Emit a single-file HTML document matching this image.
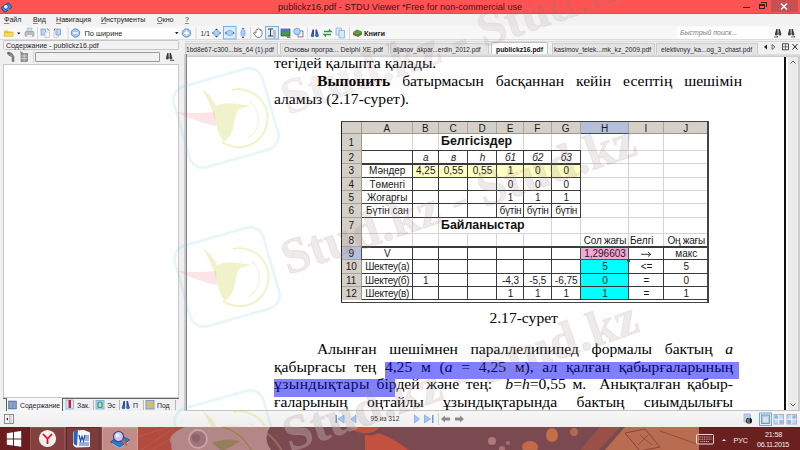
<!DOCTYPE html>
<html><head><meta charset="utf-8">
<style>
*{margin:0;padding:0;box-sizing:border-box}
html,body{width:800px;height:450px;overflow:hidden;background:#f0f0f0;font-family:"Liberation Sans",sans-serif;position:relative}
.a{position:absolute}
.ui{font-size:7.2px;color:#1e1e1e;white-space:nowrap}
#menu u{text-decoration-color:#888;text-underline-offset:1px}
#title{left:0;top:0;width:800px;height:14px;background:#fd5353}
#menu{left:0;top:14px;width:800px;height:12px;background:#f2f2f2}
#tool{left:0;top:26px;width:800px;height:14px;background:#f7f7f7;border-bottom:1px solid #dcdcdc}
#lp{left:0;top:40px;width:180px;height:371px;background:#f0f0f0}
#doc{left:184px;top:40px;width:616px;height:371px;background:#f0f0f0}
#view{left:187px;top:56.5px;width:599px;height:353.5px;background:#fff;overflow:hidden}
#status{left:0;top:411px;width:800px;height:15.5px;background:linear-gradient(#f6f6f6,#efefef)}
#task{left:0;top:426.5px;width:800px;height:23.5px;background:#7a3434}
.serif{font-family:"Liberation Serif",serif;font-size:15.6px;color:#111;white-space:nowrap}
.hl{color:#08085a}
.tc{font-family:"Liberation Sans",sans-serif;white-space:nowrap;line-height:13.3px;color:#111}
.ln{position:absolute;left:88px;width:468px;text-align:justify;text-align-last:justify;white-space:nowrap;font-family:"Liberation Serif",serif;font-size:15.6px;color:#000;line-height:18px}
</style></head><body>
<div id="title" class="a">
<div class="a" style="left:0;top:12.6px;width:800px;height:1.2px;background:#e8445a"></div>
<svg class="a" style="left:1px;top:2px" width="11" height="11" viewBox="0 0 11 11"><g transform="rotate(-35 5.5 5.5)"><rect x="1" y="2.5" width="9" height="6" rx="1" fill="#3a8ee6" stroke="#1e3c7a" stroke-width="0.8"/></g><circle cx="4.8" cy="4.8" r="2.4" fill="#dfe4f8" stroke="#333a80" stroke-width="0.8"/><line x1="6.6" y1="6.8" x2="9" y2="9.2" stroke="#e07a40" stroke-width="1.2"/></svg>
<div class="a" style="left:277.5px;top:1.2px;font-size:9.5px;transform:scaleX(0.96);transform-origin:0 0;color:#3e1818;white-space:nowrap">publickz16.pdf - STDU Viewer *Free for non-commercial use</div>
<div class="a" style="left:743px;top:7px;width:7px;height:1.3px;background:#3a2020"></div>
<div class="a" style="left:759px;top:3.5px;width:6px;height:5.5px;border:1.2px solid #3a2020;border-top-width:2px"></div>
<div class="a" style="left:761px;top:2px;width:5.5px;height:5px;border-top:1px solid #3a2020;border-right:1px solid #3a2020"></div>
<div class="a" style="left:771px;top:0;width:27px;height:11.5px;background:#c85050"></div>
<svg class="a" style="left:780px;top:2.5px" width="8" height="7" viewBox="0 0 8 7"><path d="M1 0.5 L7 6.5 M7 0.5 L1 6.5" stroke="#fff" stroke-width="1.5"/></svg>
</div>
<div id="menu" class="a">
<div class="a ui" style="left:4px;top:2px;font-size:7.1px"><u>Ф</u>айл</div>
<div class="a ui" style="left:33px;top:2px;font-size:7.1px"><u>В</u>ид</div>
<div class="a ui" style="left:56px;top:2px;font-size:7.1px"><u>Н</u>авигация</div>
<div class="a ui" style="left:101px;top:2px;font-size:7.1px"><u>И</u>нструменты</div>
<div class="a ui" style="left:157px;top:2px;font-size:7.1px"><u>О</u>кно</div>
<div class="a ui" style="left:185px;top:2px;font-size:7.1px"><u>?</u></div>
</div>
<div id="tool" class="a">
<svg class="a" style="left:0;top:0" width="800" height="14" viewBox="0 0 800 14">
<!-- folder -->
<path d="M4 4.5 h3.5 l1 1 h4 v1.5 h-8.5z" fill="#e8c440"/><path d="M4 6.5 h9.5 l-0.5 4 h-9z" fill="#f5d85a" stroke="#d0a830" stroke-width="0.4"/>
<path d="M17 6.5 h3.5 l-1.75 2z" fill="#222"/>
<!-- printer -->
<rect x="27" y="2" width="5" height="4" fill="#cfe0f4" stroke="#8aa" stroke-width="0.5"/><rect x="25" y="5.5" width="9" height="5" rx="1" fill="#b8bcc0" stroke="#888" stroke-width="0.5"/><rect x="27" y="9" width="5" height="2.5" fill="#eee"/>
<line x1="37.5" y1="1" x2="37.5" y2="13" stroke="#d8d8d8"/>
<!-- pages -->
<rect x="41" y="3" width="4.5" height="6" fill="#b8d4f4" stroke="#5a8ad0" stroke-width="0.6"/><rect x="45" y="6" width="4.5" height="5.5" fill="#f4f4f4" stroke="#aaa" stroke-width="0.5"/><path d="M47 2.5 l2 2" stroke="#222" stroke-width="0.8"/>
<rect x="54" y="6" width="4.5" height="5.5" fill="#f4f4f4" stroke="#aaa" stroke-width="0.5"/><rect x="56" y="3" width="4.5" height="6" fill="#b8d4f4" stroke="#5a8ad0" stroke-width="0.6"/><path d="M55 2.5 l-1 2" stroke="#222" stroke-width="0.8"/>
<line x1="68" y1="1" x2="68" y2="13" stroke="#d8d8d8"/>
<circle cx="75.5" cy="7" r="4.2" fill="#a8c8f0" stroke="#4a80d0" stroke-width="0.8"/><rect x="73" y="6.3" width="5" height="1.4" fill="#fff"/>
<circle cx="186.5" cy="7" r="4.2" fill="#a8c8f0" stroke="#4a80d0" stroke-width="0.8"/><rect x="184" y="6.3" width="5" height="1.4" fill="#fff"/><rect x="185.8" y="4.5" width="1.4" height="5" fill="#fff"/>
<line x1="196" y1="1" x2="196" y2="13" stroke="#d8d8d8"/>
<text x="200.5" y="9.6" font-family="Liberation Sans" font-size="6.8" fill="#333">1/1</text>
<!-- zoom icons -->
<path d="M216.5 2.5 l1.5 1.5 h-3z M216.5 11.5 l1.5 -1.5 h-3z M212 7 l1.5 -1.5 v3z M221 7 l-1.5 -1.5 v3z" fill="#333"/><circle cx="216.5" cy="7" r="3" fill="#a8d0f8" stroke="#5a90d0" stroke-width="0.5"/>
<rect x="223.5" y="0.5" width="12.5" height="12.5" fill="#dcecfc" stroke="#7ab0e8" stroke-width="1"/>
<ellipse cx="229.8" cy="7" rx="3.6" ry="2.6" fill="#a8d0f8" stroke="#5a90d0" stroke-width="0.5"/><path d="M225 7 l1.2 -1.2 v2.4z M234.6 7 l-1.2 -1.2 v2.4z" fill="#333"/>
<ellipse cx="243" cy="7" rx="2.2" ry="3.8" fill="#a8d0f8" stroke="#5a90d0" stroke-width="0.5"/><path d="M243 1.8 l1.2 1.2 h-2.4z M243 12.2 l1.2 -1.2 h-2.4z" fill="#333"/>
<line x1="250.5" y1="1" x2="250.5" y2="13" stroke="#d8d8d8"/>
<!-- hand -->
<path d="M256 7 v-3 q0.8 -1 1.5 0 v-1 q0.8 -1 1.5 0 v0.5 q0.8 -1 1.5 0 v1 q0.8 -0.8 1.5 0 v4 q-0.5 3 -3 3 h-1 q-2 0 -3 -2.5 l-1.5 -2 q0.5 -1 2 0z" fill="#fff" stroke="#333" stroke-width="0.6"/>
<rect x="265.5" y="0.5" width="13" height="12.5" fill="#dcecfc" stroke="#7ab0e8" stroke-width="1"/>
<path d="M268 3 h5 M270.5 3 v7 M268 10 h5" stroke="#333" stroke-width="0.9"/><path d="M273 5 h3 M273 7 h3 M273 9 h3 M273 11 h3" stroke="#777" stroke-width="0.7"/>
<!-- image -->
<rect x="281" y="3" width="9" height="7" fill="#4a9a40" stroke="#333" stroke-width="0.6"/><rect x="281.3" y="3.3" width="8.4" height="3" fill="#3a80d8"/><path d="M286 10 h4 M287 11.5 h3.5" stroke="#555" stroke-width="0.8"/>
<!-- globe page -->
<rect x="298" y="5" width="5" height="6" fill="#eee" stroke="#444" stroke-width="0.6"/><circle cx="297" cy="5.5" r="3.3" fill="#b0d4f8" stroke="#4a80c0" stroke-width="0.6"/>
<line x1="307.5" y1="1" x2="307.5" y2="13" stroke="#d8d8d8"/>
<!-- binoculars -->
<path d="M311 9.5 l1.5 -6 h1.5 v6z M315.5 9.5 v-6 h1.5 l1.5 6z" fill="#2a4a9a"/><circle cx="312.5" cy="9.5" r="1.8" fill="#3a6ac0"/><circle cx="317" cy="9.5" r="1.8" fill="#3a6ac0"/>
<!-- arrows -->
<path d="M324 5.5 h7 l-2 -2 M331 8.5 h-7 l2 2" stroke="#2a9a40" stroke-width="1.4" fill="none"/>
<!-- copy -->
<rect x="336" y="2" width="5.5" height="7" fill="#d8e8fa" stroke="#6a9ad8" stroke-width="0.6"/><rect x="339" y="4.5" width="5.5" height="7.5" fill="#d8e8fa" stroke="#6a9ad8" stroke-width="0.6"/>
<line x1="349.5" y1="1" x2="349.5" y2="13" stroke="#d8d8d8"/>
<!-- books -->
<path d="M353 6 l4 -2.5 l5 2 l-4 2.5z" fill="#4aa040"/><path d="M353 6 v3 l5 2 v-3z" fill="#8a6a30"/><path d="M358 8 v3 l4 -2.5 v-3z" fill="#3a8a30"/>
<text x="364" y="9.8" font-family="Liberation Sans" font-size="7.4" font-weight="bold" fill="#222">Книги</text>
<!-- search -->
<rect x="677.5" y="0.5" width="91" height="12.5" fill="#fff"/>
<text x="680" y="9.3" font-family="Liberation Sans" font-size="6.9" font-style="italic" fill="#7a7a7a">Быстрый поиск...</text>
<path d="M775 8 l1.3 -5 h1.3 v5z M778.6 8 v-5 h1.3 l1.3 5z" fill="#333"/><circle cx="776.3" cy="8" r="1.5" fill="#444"/><circle cx="779.9" cy="8" r="1.5" fill="#444"/><path d="M774 11 h4 l-1 -1" stroke="#333" stroke-width="0.7" fill="none"/>
<path d="M788 8 l1.3 -5 h1.3 v5z M791.6 8 v-5 h1.3 l1.3 5z" fill="#333"/><circle cx="789.3" cy="8" r="1.5" fill="#444"/><circle cx="792.9" cy="8" r="1.5" fill="#444"/><path d="M791 11 h4 l-1 -1" stroke="#333" stroke-width="0.7" fill="none"/>
</svg>
<div class="a" style="left:82px;top:1.5px;width:98px;height:11.5px;background:#fff"></div>
<div class="a ui" style="left:84.5px;top:3px;font-size:7.4px">По ширине</div>
<svg class="a" style="left:175px;top:6px" width="4" height="3"><path d="M0 0 h3.5 l-1.75 2.2z" fill="#222"/></svg>
</div>
<div id="lp" class="a">
<div class="a" style="left:2.8px;top:0.4px;width:176px;height:9.6px;background:#f2f2f2;border:1px solid #c6c6c6;border-radius:1.5px"></div>
<div class="a ui" style="left:6px;top:1.2px;font-size:7.6px;transform:scaleX(0.93);transform-origin:0 0;color:#1a1a2a">Содержание - publickz16.pdf</div>
<svg class="a" style="left:0;top:10px" width="180" height="14" viewBox="0 0 180 14">
<path d="M7 3 l2 -1 l3 1.5 l2 3 v5 h-2 v-4 l-2 -2 h-1z" fill="#8a8a8a" stroke="#555" stroke-width="0.5"/><path d="M8 2.5 l1.5 1.5" stroke="#333" stroke-width="0.8"/>
<rect x="21" y="3.5" width="6.5" height="8" fill="#9a9a9a" stroke="#555" stroke-width="0.5"/><path d="M21 6 h6.5 M21 8.5 h6.5 M24.2 3.5 v8" stroke="#eee" stroke-width="0.5"/><path d="M20 2 l2.5 0.5" stroke="#555" stroke-width="0.8"/>
<line x1="33.5" y1="1" x2="33.5" y2="13" stroke="#d8d8d8"/>
<path d="M166 8 l1.3 -5 h1.3 v5z M169.6 8 v-5 h1.3 l1.3 5z" fill="#333"/><circle cx="167.3" cy="8" r="1.5" fill="#444"/><circle cx="170.9" cy="8" r="1.5" fill="#444"/><path d="M170 10.5 h4 l-1 -1" stroke="#333" stroke-width="0.7" fill="none"/>
</svg>
<div class="a" style="left:35px;top:11.7px;width:125px;height:10.8px;background:#f0f0f0;border:1px solid #9a9a9a;border-radius:1px"></div>
<div class="a" style="left:3px;top:24px;width:175.5px;height:333.5px;background:#fff;border:1px solid #c8c8c8"></div>
<!-- bottom tabs -->
<div class="a" style="left:3px;top:357.5px;width:175.5px;height:1px;background:#6a6a6a"></div>
<div class="a" style="left:5.5px;top:357.5px;width:57.5px;height:14px;background:#f7f7f7;border:1px solid #5a5a5a;border-top:none;border-radius:0 0 1px 1px"></div>
<svg class="a" style="left:0;top:357px" width="180" height="15" viewBox="0 0 180 15">
<rect x="8.5" y="4" width="8" height="8" fill="#6a8ab8" stroke="#4a6aa0" stroke-width="0.5"/><path d="M9.5 6 h3 M9.5 8 h3 M9.5 10 h3 M13.5 6 h2 M13.5 8 h2 M13.5 10 h2" stroke="#ddd" stroke-width="0.7"/>
<rect x="66" y="3" width="7.5" height="9" fill="#d8e8fa" stroke="#6a9ad8" stroke-width="0.6"/><rect x="68.5" y="3" width="2.5" height="8" fill="#d02020"/>
<line x1="93.5" y1="3" x2="93.5" y2="13" stroke="#b8b8b8"/>
<rect x="96" y="3.5" width="8" height="8.5" fill="#b8d8f8" stroke="#5a90d0" stroke-width="0.6"/><rect x="98" y="5" width="4" height="5.5" rx="1" fill="none" stroke="#2a9a40" stroke-width="1.2"/>
<line x1="119.5" y1="3" x2="119.5" y2="13" stroke="#b8b8b8"/>
<path d="M122 11 l1.5 -7 h1.5 v7z M126.5 11 v-7 h1.5 l1.5 7z" fill="#2a4a9a"/><circle cx="123.5" cy="10.5" r="1.8" fill="#3a6ac0"/><circle cx="128" cy="10.5" r="1.8" fill="#3a6ac0"/>
<line x1="143.5" y1="3" x2="143.5" y2="13" stroke="#b8b8b8"/>
<rect x="146" y="3.5" width="8" height="8.5" fill="#e0c860" stroke="#6a8ad0" stroke-width="0.8"/><path d="M148 4 v8 M150 4 v8 M152 4 v8" stroke="#8aa0d0" stroke-width="0.5"/>
<line x1="175.5" y1="3" x2="175.5" y2="13" stroke="#b8b8b8"/>
</svg>
<div class="a ui" style="left:19.5px;top:361.3px;font-size:7.8px;transform:scaleX(0.88);transform-origin:0 0;color:#1e1e2a">Содержание</div>
<div class="a ui" style="left:77px;top:361.3px;font-size:7.8px;transform:scaleX(0.88);transform-origin:0 0;color:#1e1e2a">Зак.</div>
<div class="a ui" style="left:107px;top:361.3px;font-size:7.8px;transform:scaleX(0.88);transform-origin:0 0;color:#1e1e2a">Эс</div>
<div class="a ui" style="left:133px;top:361.3px;font-size:7.8px;transform:scaleX(0.88);transform-origin:0 0;color:#1e1e2a">П</div>
<div class="a ui" style="left:157px;top:361.3px;font-size:7.8px;transform:scaleX(0.88);transform-origin:0 0;color:#1e1e2a">Под</div>
</div>
<div id="doc" class="a">
<div class="a" style="left:0.5px;top:3px;width:93.69999999999999px;height:11px;background:#e4e4e4;border:1px solid #cbcbcb;border-bottom:none;border-radius:1px 1px 0 0"></div>
<div class="a" style="left:95.80000000000001px;top:3px;width:109.19999999999999px;height:11px;background:#e4e4e4;border:1px solid #cbcbcb;border-bottom:none;border-radius:1px 1px 0 0"></div>
<div class="a" style="left:206.2px;top:3px;width:98.60000000000002px;height:11px;background:#e4e4e4;border:1px solid #cbcbcb;border-bottom:none;border-radius:1px 1px 0 0"></div>
<div class="a" style="left:367.6px;top:3px;width:103.39999999999998px;height:11px;background:#e4e4e4;border:1px solid #cbcbcb;border-bottom:none;border-radius:1px 1px 0 0"></div>
<div class="a" style="left:472.20000000000005px;top:3px;width:101.79999999999995px;height:11px;background:#e4e4e4;border:1px solid #cbcbcb;border-bottom:none;border-radius:1px 1px 0 0"></div>
<div class="a" style="left:306.6px;top:2.4px;width:57.4px;height:14px;background:#fafafa;border:1px solid #c2c2c2;border-bottom:none;border-radius:2px 2px 0 0"></div>
<div class="a ui" style="left:1.6px;top:5.2px;font-size:8px;transform:scaleX(0.824);transform-origin:0 0;color:#2a2430">1bd8e67-c300...bis_64 (1).pdf</div>
<div class="a ui" style="left:99.5px;top:5.2px;font-size:8px;transform:scaleX(0.867);transform-origin:0 0;color:#2a2430">Основы програ... Delphi XE.pdf</div>
<div class="a ui" style="left:209px;top:5.2px;font-size:8px;transform:scaleX(0.8);transform-origin:0 0;color:#2a2430">aijanov_akpar...erdin_2012.pdf</div>
<div class="a ui" style="left:312px;top:5.2px;font-size:8px;transform:scaleX(0.845);transform-origin:0 0;font-weight:bold;color:#111">publickz16.pdf</div>
<div class="a ui" style="left:369.6px;top:5.2px;font-size:8px;transform:scaleX(0.836);transform-origin:0 0;color:#2a2430">kasimov_telek...mk_kz_2009.pdf</div>
<div class="a ui" style="left:477px;top:5.2px;font-size:8px;transform:scaleX(0.832);transform-origin:0 0;color:#2a2430">elektivnyy_ka...og_3_chast.pdf</div>
<svg class="a" style="left:574px;top:2px" width="42" height="12" viewBox="0 0 42 12">
<path d="M6 5 l3 -2.5 v5z" fill="#222"/><path d="M14 2.5 l3 2.5 l-3 2.5z" fill="none" stroke="#333" stroke-width="0.7"/>
<rect x="8.5" y="2.5" width="0" height="0"/>
<rect x="24.5" y="1.8" width="6" height="6" fill="none" stroke="#333" stroke-width="0.8"/><path d="M24.5 4.8 h6 M27.5 1.8 v6" stroke="#333" stroke-width="0.6"/>
<path d="M34.5 2 l5 5.5 M39.5 2 l-5 5.5" stroke="#222" stroke-width="1"/>
</svg>
<div class="a" style="left:0.5px;top:13.5px;width:615.5px;height:3px;background:linear-gradient(#e4e4e4,#cacaca)"></div>
<div class="a" style="left:0.5px;top:1px;width:615.5px;height:1px;background:#dadada"></div>
<div class="a" style="left:0px;top:14px;width:3px;height:356.5px;background:linear-gradient(90deg,#d4d4d4 0,#c4c4c4 60%,#858585 60%,#858585 100%)"></div>
<div class="a" style="left:602px;top:16.5px;width:14px;height:354px;background:#fff"></div><div class="a" style="left:604px;top:16.5px;width:9.5px;height:354px;background:#ebebeb"></div><div class="a" style="left:613.5px;top:16.5px;width:2.5px;height:354px;background:#cdcdcd"></div>
<svg class="a" style="left:604px;top:18px" width="10" height="8"><path d="M2.5 5.5 l2.5 -2.5 l2.5 2.5" stroke="#555" stroke-width="0.9" fill="none"/></svg>
<svg class="a" style="left:604px;top:361px" width="10" height="8"><path d="M2.5 2.5 l2.5 2.5 l2.5 -2.5" stroke="#555" stroke-width="0.9" fill="none"/></svg>
<div class="a" style="left:0.5px;top:370px;width:615.5px;height:1.5px;background:#c4c4c4"></div>
</div>
<div id="view" class="a"><div id="pg" class="a" style="left:-187px;top:-56.5px;width:800px;height:450px">
<div class="a" style="left:385px;top:361.5px;width:353.5px;height:17px;background:#8080ff"></div>
<div class="a" style="left:274px;top:378.5px;width:120.5px;height:18px;background:#8080ff"></div>
<div class="ln" style="left:274px;top:53.9px;width:auto;text-align:left">тегідей қалыпта қалады.</div>
<div class="ln" style="left:317px;top:72px;width:425px"><b>Выпонить</b> батырмасын басқаннан кейін есептің шешімін</div>
<div class="ln" style="left:274px;top:89.7px;width:auto;text-align:left">аламыз (2.17-сурет).</div>
<!--T--><div class="a" style="left:341px;top:121px;width:367px;height:181px;background:#fff;"></div>
<div class="a" style="left:341px;top:121px;width:367px;height:12.5px;background:#d4d0c8;"></div>
<div class="a" style="left:341px;top:121px;width:20.5px;height:179px;background:#d4d0c8;"></div>
<div class="a" style="left:580.5px;top:121px;width:48.0px;height:12.5px;background:#b6bfd9;"></div>
<div class="a" style="left:341px;top:246.5px;width:20.5px;height:13.0px;background:#b6bfd9;"></div>
<div class="a" style="left:412px;top:163.5px;width:168.5px;height:13.5px;background:#ffffc4;"></div>
<div class="a" style="left:580.5px;top:259.5px;width:48.0px;height:40.5px;background:#00ffff;"></div>
<div class="a" style="left:580.5px;top:246.5px;width:48.0px;height:13.0px;background:#f7a6d6;"></div>
<div class="a" style="left:411.5px;top:133.5px;width:1.0px;height:166.5px;background:#d6d2d6;"></div>
<div class="a" style="left:438.0px;top:133.5px;width:1.0px;height:166.5px;background:#d6d2d6;"></div>
<div class="a" style="left:467.0px;top:133.5px;width:1.0px;height:166.5px;background:#d6d2d6;"></div>
<div class="a" style="left:496.0px;top:133.5px;width:1.0px;height:166.5px;background:#d6d2d6;"></div>
<div class="a" style="left:523.0px;top:133.5px;width:1.0px;height:166.5px;background:#d6d2d6;"></div>
<div class="a" style="left:550.5px;top:133.5px;width:1.0px;height:166.5px;background:#d6d2d6;"></div>
<div class="a" style="left:580.0px;top:133.5px;width:1.0px;height:166.5px;background:#d6d2d6;"></div>
<div class="a" style="left:628.0px;top:133.5px;width:1.0px;height:166.5px;background:#d6d2d6;"></div>
<div class="a" style="left:663.0px;top:133.5px;width:1.0px;height:166.5px;background:#d6d2d6;"></div>
<div class="a" style="left:361.5px;top:150.0px;width:346.5px;height:1.0px;background:#d6d2d6;"></div>
<div class="a" style="left:361.5px;top:163.0px;width:346.5px;height:1.0px;background:#d6d2d6;"></div>
<div class="a" style="left:361.5px;top:176.5px;width:346.5px;height:1.0px;background:#d6d2d6;"></div>
<div class="a" style="left:361.5px;top:189.5px;width:346.5px;height:1.0px;background:#d6d2d6;"></div>
<div class="a" style="left:361.5px;top:203.0px;width:346.5px;height:1.0px;background:#d6d2d6;"></div>
<div class="a" style="left:361.5px;top:216.5px;width:346.5px;height:1.0px;background:#d6d2d6;"></div>
<div class="a" style="left:361.5px;top:233.0px;width:346.5px;height:1.0px;background:#d6d2d6;"></div>
<div class="a" style="left:361.5px;top:246.0px;width:346.5px;height:1.0px;background:#d6d2d6;"></div>
<div class="a" style="left:361.5px;top:259.0px;width:346.5px;height:1.0px;background:#d6d2d6;"></div>
<div class="a" style="left:361.5px;top:272.5px;width:346.5px;height:1.0px;background:#d6d2d6;"></div>
<div class="a" style="left:361.5px;top:286.0px;width:346.5px;height:1.0px;background:#d6d2d6;"></div>
<div class="a" style="left:361.0px;top:121px;width:1.0px;height:12.5px;background:#a8a49c;"></div>
<div class="a" style="left:411.5px;top:121px;width:1.0px;height:12.5px;background:#a8a49c;"></div>
<div class="a" style="left:438.0px;top:121px;width:1.0px;height:12.5px;background:#a8a49c;"></div>
<div class="a" style="left:467.0px;top:121px;width:1.0px;height:12.5px;background:#a8a49c;"></div>
<div class="a" style="left:496.0px;top:121px;width:1.0px;height:12.5px;background:#a8a49c;"></div>
<div class="a" style="left:523.0px;top:121px;width:1.0px;height:12.5px;background:#a8a49c;"></div>
<div class="a" style="left:550.5px;top:121px;width:1.0px;height:12.5px;background:#a8a49c;"></div>
<div class="a" style="left:580.0px;top:121px;width:1.0px;height:12.5px;background:#a8a49c;"></div>
<div class="a" style="left:628.0px;top:121px;width:1.0px;height:12.5px;background:#a8a49c;"></div>
<div class="a" style="left:663.0px;top:121px;width:1.0px;height:12.5px;background:#a8a49c;"></div>
<div class="a" style="left:341px;top:133.0px;width:20.5px;height:1.0px;background:#a8a49c;"></div>
<div class="a" style="left:341px;top:150.0px;width:20.5px;height:1.0px;background:#a8a49c;"></div>
<div class="a" style="left:341px;top:163.0px;width:20.5px;height:1.0px;background:#a8a49c;"></div>
<div class="a" style="left:341px;top:176.5px;width:20.5px;height:1.0px;background:#a8a49c;"></div>
<div class="a" style="left:341px;top:189.5px;width:20.5px;height:1.0px;background:#a8a49c;"></div>
<div class="a" style="left:341px;top:203.0px;width:20.5px;height:1.0px;background:#a8a49c;"></div>
<div class="a" style="left:341px;top:216.5px;width:20.5px;height:1.0px;background:#a8a49c;"></div>
<div class="a" style="left:341px;top:233.0px;width:20.5px;height:1.0px;background:#a8a49c;"></div>
<div class="a" style="left:341px;top:246.0px;width:20.5px;height:1.0px;background:#a8a49c;"></div>
<div class="a" style="left:341px;top:259.0px;width:20.5px;height:1.0px;background:#a8a49c;"></div>
<div class="a" style="left:341px;top:272.5px;width:20.5px;height:1.0px;background:#a8a49c;"></div>
<div class="a" style="left:341px;top:286.0px;width:20.5px;height:1.0px;background:#a8a49c;"></div>
<div class="a" style="left:341px;top:133px;width:367px;height:1px;background:#9c988e;"></div>
<div class="a" style="left:361px;top:121px;width:1px;height:179px;background:#9c988e;"></div>
<div class="a" style="left:580.5px;top:132.5px;width:48.0px;height:1.5px;background:#3a4a80;"></div>
<div class="a" style="left:360.5px;top:246.5px;width:1.5px;height:13.0px;background:#3a4a80;"></div>
<div class="a" style="left:411.5px;top:150.5px;width:1.0px;height:66.5px;background:#3a3a3a;"></div>
<div class="a" style="left:438.0px;top:150.5px;width:1.0px;height:66.5px;background:#3a3a3a;"></div>
<div class="a" style="left:467.0px;top:150.5px;width:1.0px;height:66.5px;background:#3a3a3a;"></div>
<div class="a" style="left:496.0px;top:150.5px;width:1.0px;height:66.5px;background:#3a3a3a;"></div>
<div class="a" style="left:523.0px;top:150.5px;width:1.0px;height:66.5px;background:#3a3a3a;"></div>
<div class="a" style="left:550.5px;top:150.5px;width:1.0px;height:66.5px;background:#3a3a3a;"></div>
<div class="a" style="left:580.0px;top:150.5px;width:1.0px;height:66.5px;background:#3a3a3a;"></div>
<div class="a" style="left:361.5px;top:150.0px;width:219.0px;height:1.0px;background:#3a3a3a;"></div>
<div class="a" style="left:361.5px;top:176.5px;width:219.0px;height:1.0px;background:#3a3a3a;"></div>
<div class="a" style="left:361.5px;top:189.5px;width:219.0px;height:1.0px;background:#3a3a3a;"></div>
<div class="a" style="left:361.5px;top:203.0px;width:219.0px;height:1.0px;background:#3a3a3a;"></div>
<div class="a" style="left:361.5px;top:216.5px;width:219.0px;height:1.0px;background:#3a3a3a;"></div>
<div class="a" style="left:361.5px;top:162.5px;width:219.0px;height:2.0px;background:#3a3a3a;"></div>
<div class="a" style="left:411.5px;top:150.5px;width:1.0px;height:66.5px;background:#3a3a3a;"></div>
<div class="a" style="left:411.5px;top:246.5px;width:1.0px;height:53.5px;background:#3a3a3a;"></div>
<div class="a" style="left:438.0px;top:246.5px;width:1.0px;height:53.5px;background:#3a3a3a;"></div>
<div class="a" style="left:467.0px;top:246.5px;width:1.0px;height:53.5px;background:#3a3a3a;"></div>
<div class="a" style="left:496.0px;top:246.5px;width:1.0px;height:53.5px;background:#3a3a3a;"></div>
<div class="a" style="left:523.0px;top:246.5px;width:1.0px;height:53.5px;background:#3a3a3a;"></div>
<div class="a" style="left:550.5px;top:246.5px;width:1.0px;height:53.5px;background:#3a3a3a;"></div>
<div class="a" style="left:580.0px;top:246.5px;width:1.0px;height:53.5px;background:#3a3a3a;"></div>
<div class="a" style="left:628.0px;top:246.5px;width:1.0px;height:53.5px;background:#3a3a3a;"></div>
<div class="a" style="left:663.0px;top:246.5px;width:1.0px;height:53.5px;background:#3a3a3a;"></div>
<div class="a" style="left:361.5px;top:246.0px;width:346.5px;height:1.0px;background:#3a3a3a;"></div>
<div class="a" style="left:361.5px;top:259.0px;width:346.5px;height:1.0px;background:#3a3a3a;"></div>
<div class="a" style="left:361.5px;top:272.5px;width:346.5px;height:1.0px;background:#3a3a3a;"></div>
<div class="a" style="left:361.5px;top:286.0px;width:346.5px;height:1.0px;background:#3a3a3a;"></div>
<div class="a" style="left:361.5px;top:246px;width:346.5px;height:1.5px;background:#3a3a3a;"></div>
<div class="a" style="left:361.5px;top:298.8px;width:346.5px;height:1.1999999999999886px;background:#3a3a3a;"></div>
<div class="a" style="left:580px;top:246px;width:49px;height:14px;border:1.5px solid #2e5e3e"></div>
<div class="a" style="left:627px;top:258.5px;width:3px;height:3.0px;background:#2e5e3e;"></div>
<div class="a" style="left:340.5px;top:120.5px;width:1.5px;height:182.0px;background:#222;"></div>
<div class="a" style="left:340.5px;top:120.5px;width:368.0px;height:1.0px;background:#444;"></div>
<div class="a" style="left:707px;top:120.5px;width:1.5px;height:182.0px;background:#444;"></div>
<div class="a" style="left:340.5px;top:301.8px;width:368.0px;height:1.099999999999966px;background:#444;"></div>
<div class="a" style="left:439px;top:134px;width:84px;height:16px;background:#fff;"></div>
<div class="a" style="left:439px;top:217.6px;width:111.5px;height:15.400000000000006px;background:#fff;"></div>
<div class="a tc" style="left:361.5px;top:121.8px;width:50.5px;text-align:center;font-size:10px;font-weight:normal;font-style:normal;color:#1a1a1a;letter-spacing:0px">A</div>
<div class="a tc" style="left:412px;top:121.8px;width:26.5px;text-align:center;font-size:10px;font-weight:normal;font-style:normal;color:#1a1a1a;letter-spacing:0px">B</div>
<div class="a tc" style="left:438.5px;top:121.8px;width:29.0px;text-align:center;font-size:10px;font-weight:normal;font-style:normal;color:#1a1a1a;letter-spacing:0px">C</div>
<div class="a tc" style="left:467.5px;top:121.8px;width:29.0px;text-align:center;font-size:10px;font-weight:normal;font-style:normal;color:#1a1a1a;letter-spacing:0px">D</div>
<div class="a tc" style="left:496.5px;top:121.8px;width:27.0px;text-align:center;font-size:10px;font-weight:normal;font-style:normal;color:#1a1a1a;letter-spacing:0px">E</div>
<div class="a tc" style="left:523.5px;top:121.8px;width:27.5px;text-align:center;font-size:10px;font-weight:normal;font-style:normal;color:#1a1a1a;letter-spacing:0px">F</div>
<div class="a tc" style="left:551px;top:121.8px;width:29.5px;text-align:center;font-size:10px;font-weight:normal;font-style:normal;color:#1a1a1a;letter-spacing:0px">G</div>
<div class="a tc" style="left:580.5px;top:121.8px;width:48.0px;text-align:center;font-size:10px;font-weight:normal;font-style:normal;color:#1a1a1a;letter-spacing:0px">H</div>
<div class="a tc" style="left:628.5px;top:121.8px;width:35.0px;text-align:center;font-size:10px;font-weight:normal;font-style:normal;color:#1a1a1a;letter-spacing:0px">I</div>
<div class="a tc" style="left:663.5px;top:121.8px;width:44.5px;text-align:center;font-size:10px;font-weight:normal;font-style:normal;color:#1a1a1a;letter-spacing:0px">J</div>
<div class="a tc" style="left:341px;top:136.15px;width:20.5px;text-align:center;font-size:10px;font-weight:normal;font-style:normal;color:#1a1a1a;letter-spacing:0px">1</div>
<div class="a tc" style="left:341px;top:151.15px;width:20.5px;text-align:center;font-size:10px;font-weight:normal;font-style:normal;color:#1a1a1a;letter-spacing:0px">2</div>
<div class="a tc" style="left:341px;top:164.4px;width:20.5px;text-align:center;font-size:10px;font-weight:normal;font-style:normal;color:#1a1a1a;letter-spacing:0px">3</div>
<div class="a tc" style="left:341px;top:177.65px;width:20.5px;text-align:center;font-size:10px;font-weight:normal;font-style:normal;color:#1a1a1a;letter-spacing:0px">4</div>
<div class="a tc" style="left:341px;top:190.9px;width:20.5px;text-align:center;font-size:10px;font-weight:normal;font-style:normal;color:#1a1a1a;letter-spacing:0px">5</div>
<div class="a tc" style="left:341px;top:204.4px;width:20.5px;text-align:center;font-size:10px;font-weight:normal;font-style:normal;color:#1a1a1a;letter-spacing:0px">6</div>
<div class="a tc" style="left:341px;top:219.4px;width:20.5px;text-align:center;font-size:10px;font-weight:normal;font-style:normal;color:#1a1a1a;letter-spacing:0px">7</div>
<div class="a tc" style="left:341px;top:234.15px;width:20.5px;text-align:center;font-size:10px;font-weight:normal;font-style:normal;color:#1a1a1a;letter-spacing:0px">8</div>
<div class="a tc" style="left:341px;top:247.15px;width:20.5px;text-align:center;font-size:10px;font-weight:normal;font-style:normal;color:#1a1a1a;letter-spacing:0px">9</div>
<div class="a tc" style="left:341px;top:260.40000000000003px;width:20.5px;text-align:center;font-size:10px;font-weight:normal;font-style:normal;color:#1a1a1a;letter-spacing:0px">10</div>
<div class="a tc" style="left:341px;top:273.90000000000003px;width:20.5px;text-align:center;font-size:10px;font-weight:normal;font-style:normal;color:#1a1a1a;letter-spacing:0px">11</div>
<div class="a tc" style="left:341px;top:287.40000000000003px;width:20.5px;text-align:center;font-size:10px;font-weight:normal;font-style:normal;color:#1a1a1a;letter-spacing:0px">12</div>
<div class="a tc" style="left:441px;top:135.0px;font-size:12.4px;font-weight:bold">Белгісіздер</div>
<div class="a tc" style="left:441px;top:218.5px;font-size:12.4px;font-weight:bold">Байланыстар</div>
<div class="a tc" style="left:412.5px;top:151.15px;width:26.5px;text-align:center;font-size:10px;font-weight:normal;font-style:italic;color:#1a1a1a;letter-spacing:0px">а</div>
<div class="a tc" style="left:439.0px;top:151.15px;width:29.0px;text-align:center;font-size:10px;font-weight:normal;font-style:italic;color:#1a1a1a;letter-spacing:0px">в</div>
<div class="a tc" style="left:468.0px;top:151.15px;width:29.0px;text-align:center;font-size:10px;font-weight:normal;font-style:italic;color:#1a1a1a;letter-spacing:0px">h</div>
<div class="a tc" style="left:497.0px;top:151.15px;width:27.0px;text-align:center;font-size:10px;font-weight:normal;font-style:italic;color:#1a1a1a;letter-spacing:0px">б1</div>
<div class="a tc" style="left:524.0px;top:151.15px;width:27.5px;text-align:center;font-size:10px;font-weight:normal;font-style:italic;color:#1a1a1a;letter-spacing:0px">б2</div>
<div class="a tc" style="left:551.5px;top:151.15px;width:29.5px;text-align:center;font-size:10px;font-weight:normal;font-style:italic;color:#1a1a1a;letter-spacing:0px">б3</div>
<div class="a tc" style="left:362.0px;top:164.4px;width:50.5px;text-align:center;font-size:10px;font-weight:normal;font-style:normal;color:#1a1a1a;letter-spacing:0px">Мәндер</div>
<div class="a tc" style="left:412.5px;top:164.4px;width:26.5px;text-align:center;font-size:10px;font-weight:normal;font-style:normal;color:#1a1a1a;letter-spacing:0px">4,25</div>
<div class="a tc" style="left:439.0px;top:164.4px;width:29.0px;text-align:center;font-size:10px;font-weight:normal;font-style:normal;color:#1a1a1a;letter-spacing:0px">0,55</div>
<div class="a tc" style="left:468.0px;top:164.4px;width:29.0px;text-align:center;font-size:10px;font-weight:normal;font-style:normal;color:#1a1a1a;letter-spacing:0px">0,55</div>
<div class="a tc" style="left:497.0px;top:164.4px;width:27.0px;text-align:center;font-size:10px;font-weight:normal;font-style:normal;color:#1a1a1a;letter-spacing:0px">1</div>
<div class="a tc" style="left:524.0px;top:164.4px;width:27.5px;text-align:center;font-size:10px;font-weight:normal;font-style:normal;color:#1a1a1a;letter-spacing:0px">0</div>
<div class="a tc" style="left:551.5px;top:164.4px;width:29.5px;text-align:center;font-size:10px;font-weight:normal;font-style:normal;color:#1a1a1a;letter-spacing:0px">0</div>
<div class="a tc" style="left:362.0px;top:177.65px;width:50.5px;text-align:center;font-size:10px;font-weight:normal;font-style:normal;color:#1a1a1a;letter-spacing:0px">Төменгі</div>
<div class="a tc" style="left:497.0px;top:177.65px;width:27.0px;text-align:center;font-size:10px;font-weight:normal;font-style:normal;color:#1a1a1a;letter-spacing:0px">0</div>
<div class="a tc" style="left:524.0px;top:177.65px;width:27.5px;text-align:center;font-size:10px;font-weight:normal;font-style:normal;color:#1a1a1a;letter-spacing:0px">0</div>
<div class="a tc" style="left:551.5px;top:177.65px;width:29.5px;text-align:center;font-size:10px;font-weight:normal;font-style:normal;color:#1a1a1a;letter-spacing:0px">0</div>
<div class="a tc" style="left:362.0px;top:190.9px;width:50.5px;text-align:center;font-size:10px;font-weight:normal;font-style:normal;color:#1a1a1a;letter-spacing:0px">Жоғарғы</div>
<div class="a tc" style="left:497.0px;top:190.9px;width:27.0px;text-align:center;font-size:10px;font-weight:normal;font-style:normal;color:#1a1a1a;letter-spacing:0px">1</div>
<div class="a tc" style="left:524.0px;top:190.9px;width:27.5px;text-align:center;font-size:10px;font-weight:normal;font-style:normal;color:#1a1a1a;letter-spacing:0px">1</div>
<div class="a tc" style="left:551.5px;top:190.9px;width:29.5px;text-align:center;font-size:10px;font-weight:normal;font-style:normal;color:#1a1a1a;letter-spacing:0px">1</div>
<div class="a tc" style="left:362.0px;top:204.4px;width:50.5px;text-align:center;font-size:10px;font-weight:normal;font-style:normal;color:#1a1a1a;letter-spacing:0px">Бүтін сан</div>
<div class="a tc" style="left:497.0px;top:204.4px;width:27.0px;text-align:center;font-size:10px;font-weight:normal;font-style:normal;color:#1a1a1a;letter-spacing:-0.25px">бүтін</div>
<div class="a tc" style="left:524.0px;top:204.4px;width:27.5px;text-align:center;font-size:10px;font-weight:normal;font-style:normal;color:#1a1a1a;letter-spacing:-0.25px">бүтін</div>
<div class="a tc" style="left:551.5px;top:204.4px;width:29.5px;text-align:center;font-size:10px;font-weight:normal;font-style:normal;color:#1a1a1a;letter-spacing:-0.25px">бүтін</div>
<div class="a tc" style="left:581.0px;top:234.15px;width:48.0px;text-align:center;font-size:10px;font-weight:normal;font-style:normal;color:#1a1a1a;letter-spacing:-0.25px">Сол жағы</div>
<div class="a tc" style="left:630px;top:234.3px;font-size:10px">Белгі</div>
<div class="a tc" style="left:664.0px;top:234.15px;width:44.5px;text-align:center;font-size:10px;font-weight:normal;font-style:normal;color:#1a1a1a;letter-spacing:-0.25px">Оң жағы</div>
<div class="a tc" style="left:362.0px;top:247.15px;width:50.5px;text-align:center;font-size:10px;font-weight:normal;font-style:normal;color:#1a1a1a;letter-spacing:0px">V</div>
<div class="a tc" style="left:581.0px;top:247.15px;width:48.0px;text-align:center;font-size:10px;font-weight:normal;font-style:normal;color:#1a1a1a;letter-spacing:0px">1,296603</div>
<svg class="a" style="left:640px;top:250px" width="13" height="8" viewBox="0 0 13 8"><path d="M1 4.3 H10.7 M8 2 L10.7 4.3 L8 6.5" stroke="#222" stroke-width="0.9" fill="none"/></svg>
<div class="a tc" style="left:664.0px;top:247.15px;width:44.5px;text-align:center;font-size:10px;font-weight:normal;font-style:normal;color:#1a1a1a;letter-spacing:0px">макс</div>
<div class="a tc" style="left:362.0px;top:260.40000000000003px;width:50.5px;text-align:center;font-size:10px;font-weight:normal;font-style:normal;color:#1a1a1a;letter-spacing:-0.25px">Шектеу(а)</div>
<div class="a tc" style="left:581.0px;top:260.40000000000003px;width:48.0px;text-align:center;font-size:10px;font-weight:normal;font-style:normal;color:#1a1a1a;letter-spacing:0px">5</div>
<div class="a tc" style="left:629.0px;top:260.40000000000003px;width:35.0px;text-align:center;font-size:10px;font-weight:normal;font-style:normal;color:#1a1a1a;letter-spacing:0px">&lt;=</div>
<div class="a tc" style="left:664.0px;top:260.40000000000003px;width:44.5px;text-align:center;font-size:10px;font-weight:normal;font-style:normal;color:#1a1a1a;letter-spacing:0px">5</div>
<div class="a tc" style="left:362.0px;top:273.90000000000003px;width:50.5px;text-align:center;font-size:10px;font-weight:normal;font-style:normal;color:#1a1a1a;letter-spacing:-0.25px">Шектеу(б)</div>
<div class="a tc" style="left:412.5px;top:273.90000000000003px;width:26.5px;text-align:center;font-size:10px;font-weight:normal;font-style:normal;color:#1a1a1a;letter-spacing:0px">1</div>
<div class="a tc" style="left:497.0px;top:273.90000000000003px;width:27.0px;text-align:center;font-size:10px;font-weight:normal;font-style:normal;color:#1a1a1a;letter-spacing:0px">-4,3</div>
<div class="a tc" style="left:524.0px;top:273.90000000000003px;width:27.5px;text-align:center;font-size:10px;font-weight:normal;font-style:normal;color:#1a1a1a;letter-spacing:0px">-5,5</div>
<div class="a tc" style="left:551.5px;top:273.90000000000003px;width:29.5px;text-align:center;font-size:10px;font-weight:normal;font-style:normal;color:#1a1a1a;letter-spacing:0px">-6,75</div>
<div class="a tc" style="left:581.0px;top:273.90000000000003px;width:48.0px;text-align:center;font-size:10px;font-weight:normal;font-style:normal;color:#1a1a1a;letter-spacing:0px">0</div>
<div class="a tc" style="left:629.0px;top:273.90000000000003px;width:35.0px;text-align:center;font-size:10px;font-weight:normal;font-style:normal;color:#1a1a1a;letter-spacing:0px">=</div>
<div class="a tc" style="left:664.0px;top:273.90000000000003px;width:44.5px;text-align:center;font-size:10px;font-weight:normal;font-style:normal;color:#1a1a1a;letter-spacing:0px">0</div>
<div class="a tc" style="left:362.0px;top:287.40000000000003px;width:50.5px;text-align:center;font-size:10px;font-weight:normal;font-style:normal;color:#1a1a1a;letter-spacing:-0.25px">Шектеу(в)</div>
<div class="a tc" style="left:497.0px;top:287.40000000000003px;width:27.0px;text-align:center;font-size:10px;font-weight:normal;font-style:normal;color:#1a1a1a;letter-spacing:0px">1</div>
<div class="a tc" style="left:524.0px;top:287.40000000000003px;width:27.5px;text-align:center;font-size:10px;font-weight:normal;font-style:normal;color:#1a1a1a;letter-spacing:0px">1</div>
<div class="a tc" style="left:551.5px;top:287.40000000000003px;width:29.5px;text-align:center;font-size:10px;font-weight:normal;font-style:normal;color:#1a1a1a;letter-spacing:0px">1</div>
<div class="a tc" style="left:581.0px;top:287.40000000000003px;width:48.0px;text-align:center;font-size:10px;font-weight:normal;font-style:normal;color:#1a1a1a;letter-spacing:0px">1</div>
<div class="a tc" style="left:629.0px;top:287.40000000000003px;width:35.0px;text-align:center;font-size:10px;font-weight:normal;font-style:normal;color:#1a1a1a;letter-spacing:0px">=</div>
<div class="a tc" style="left:664.0px;top:287.40000000000003px;width:44.5px;text-align:center;font-size:10px;font-weight:normal;font-style:normal;color:#1a1a1a;letter-spacing:0px">1</div><!--/T-->
<div class="ln" style="left:489.4px;top:308.6px;width:auto;text-align:left">2.17-сурет</div>
<div class="ln" style="left:317px;top:340.1px;width:416px">Алынған шешімнен параллелипипед формалы бактың <i>а</i></div>
<div class="ln" style="left:274px;top:357.5px;width:459px">қабырғасы тең <span class="hl">4,25 м (<i>а</i> = 4,25 м), ал қалған қабырғаларының</span></div>
<div class="ln" style="left:274px;top:375.1px;width:459px"><span class="hl"><span style="letter-spacing:0.45px">ұзындықтары</span> бір</span>дей және тең:&nbsp; <i>b</i>=<i>h</i>=0,55 м.&nbsp; Анықталған қабыр-</div>
<div class="ln" style="left:274px;top:392.7px;width:459px">ғаларының оңтайлы ұзындықтарында бактың сиымдылығы</div>
<div class="a" style="left:784px;top:0;width:2px;height:450px;background:#111"></div>
</div></div>
<div id="status" class="a">
<svg class="a" style="left:0;top:0" width="800" height="15" viewBox="0 0 800 15">
<rect x="4.5" y="3.5" width="9" height="9" fill="#f4f4f4" stroke="#777" stroke-width="0.8"/><path d="M6 8 l2 -1.5 v3z" fill="#333"/><path d="M9.5 4 v8 M11 4 v8" stroke="#999" stroke-width="0.6"/>
<rect x="335.5" y="4" width="1.5" height="8" fill="#6a9ae0"/><path d="M344 4 v8 l-6 -4z" fill="#a8c8f0" stroke="#6a9ae0" stroke-width="0.6"/>
<path d="M356 4 v8 l-5 -4z" fill="#a8c8f0" stroke="#6a9ae0" stroke-width="0.6"/>
<path d="M414.5 4 v8 l5 -4z" fill="#a8c8f0" stroke="#6a9ae0" stroke-width="0.6"/>
<path d="M424.5 4 v8 l6 -4z" fill="#a8c8f0" stroke="#6a9ae0" stroke-width="0.6"/><rect x="432" y="4" width="1.5" height="8" fill="#6a9ae0"/>
<line x1="438.5" y1="2" x2="438.5" y2="14" stroke="#d0d0d0"/>
<path d="M441 8 l4 -3.5 v2 h5 v3 h-5 v2z" fill="#8a8a8a"/>
<path d="M464 8 l-4 -3.5 v2 h-5 v3 h5 v2z" fill="#8a8a8a"/>
<rect x="744" y="3" width="6.5" height="8" fill="#b8d0f0" stroke="#7aa0d8" stroke-width="0.6"/><circle cx="749" cy="9.8" r="3" fill="#111"/><path d="M749 6.8 v6" stroke="#e8e8e8" stroke-width="0.8"/><path d="M747.6 8 v3.6" stroke="#fff" stroke-width="0.5"/>
<rect x="759.5" y="2" width="12" height="12.5" fill="#dfeefc" stroke="#6aa8e8" stroke-width="1"/><rect x="761.5" y="4" width="8" height="8.5" fill="#b8cbe4" stroke="#8a8a98" stroke-width="0.9"/><rect x="763" y="6" width="5" height="5" fill="#d4e2f4"/>
<rect x="774" y="3.5" width="9.5" height="9.5" fill="#c8d8ee" stroke="#9aa4b4" stroke-width="0.8"/><path d="M774 8.2 h9.5 M778.7 3.5 v9.5" stroke="#eef4fc" stroke-width="1"/><rect x="775" y="4.5" width="3" height="3" fill="#8ab4e8"/><rect x="779.6" y="9.2" width="3" height="3" fill="#8ab4e8"/>
<rect x="787" y="3.5" width="9.5" height="9.5" fill="#c8d8ee" stroke="#9aa4b4" stroke-width="0.8"/><path d="M787 8.2 h9.5 M791.7 3.5 v9.5" stroke="#eef4fc" stroke-width="1"/><rect x="788" y="9.2" width="3" height="3" fill="#8ab4e8"/><rect x="792.6" y="4.5" width="3" height="3" fill="#8ab4e8"/>
</svg>
<div class="a ui" style="left:370.6px;top:4px;font-size:6.6px;color:#333">95 из 312</div>
</div>
<div id="task" class="a">
<svg class="a" style="left:0;top:0" width="800" height="24" viewBox="0 0 800 24">
<rect width="800" height="24" fill="#7a4a50"/>
<path d="M135 0 H185 L172 24 H135z" fill="#b24c3e"/>
<path d="M140 24 L175 0 M150 24 L185 3 M137 10 L170 0" stroke="#c46a58" stroke-width="0.8" opacity="0.6"/>
<ellipse cx="218" cy="13" rx="48" ry="17" fill="#b08486"/>
<path d="M172 24 Q168 6 185 0 H270 Q262 12 272 24z" fill="#b38687"/>
<circle cx="198" cy="12" r="9" fill="#a07478" stroke="#c8a4a4" stroke-width="2"/>
<circle cx="196" cy="11" r="4" fill="#8e6468"/>
<path d="M222 0 Q240 4 252 24" stroke="#9a8040" stroke-width="1.2" fill="none"/>
<path d="M212 16 Q228 10 240 14 Q232 20 222 24" fill="#8e7a50" opacity="0.8"/>
<path d="M248 0 Q270 2 282 24" stroke="#b09070" stroke-width="2" fill="none" opacity="0.5"/>
<path d="M350 0 H380 Q372 8 362 6 Q352 4 350 0z" fill="#c24e3c"/>
<path d="M365 8 Q372 10 378 6 Q392 10 410 24 H365z" fill="#c45040"/>
<circle cx="492" cy="14" r="4" fill="#b07a7c"/><circle cx="508" cy="16" r="2" fill="#a07074"/><circle cx="502" cy="22" r="3" fill="#a87476"/>
<ellipse cx="530" cy="20" rx="8" ry="6" fill="#c06a48"/>
<ellipse cx="552" cy="8" rx="6" ry="7" fill="#c47048"/>
<ellipse cx="574" cy="5" rx="4" ry="4" fill="#b46a50"/>
<path d="M580 24 Q590 10 600 0 H620 L598 24z" fill="#9a5048"/>
<path d="M604 24 L625 0 H700 V24z" fill="#b86c50"/>
<path d="M625 6 L645 2 L660 20 L640 24z" fill="none" stroke="#8a4438" stroke-width="1"/>
<path d="M640 8 L652 18 M648 8 L638 18 M660 4 L700 18" stroke="#8a4438" stroke-width="0.8" fill="none"/>
<rect x="699" y="0" width="101" height="24" fill="#6b2020"/>
</svg>
<div class="a" style="left:0;top:0;width:30px;height:24px;background:#6a1c1e"></div>
<svg class="a" style="left:0;top:0" width="140" height="24" viewBox="0 0 140 24">
<path d="M6.8 6.2 L13 5.3 V11.5 H6.8z M14 5.1 L21.2 4.1 V11.5 H14z M6.8 12.5 H13 V18.6 L6.8 17.8z M14 12.5 H21.2 V19.7 L14 18.7z" fill="#fff"/>
<rect x="30.5" y="0.5" width="34" height="23" fill="#84403f" stroke="#9a5656" stroke-width="0.8"/>
<circle cx="47.5" cy="11.5" r="8.6" fill="#f2f0f0"/>
<path d="M43 7 L47.5 11.8 L52 7 M47.5 11.8 V17" stroke="#e8101a" stroke-width="1.8" fill="none"/>
<rect x="66.5" y="0.5" width="33.5" height="23" fill="#7c3c3c" stroke="#5a2222" stroke-width="0.8"/>
<path d="M73 5 Q78 2.5 84 3 L90 5.5 V20 L76 20.5 Q73 19 73 17z" fill="#f4f6fa"/>
<path d="M73.5 5 Q75 3.5 78 3.3 L77 18.5 Q74 18 73.5 16z" fill="#2a64c0"/>
<path d="M79 8 L80.5 14 L82 9.5 L83.5 14 L85 8" stroke="#1e4ea8" stroke-width="1.2" fill="none"/><path d="M85 9 h4 M85 11 h4 M85 13 h4 M79 16 h10 M79 18 h10" stroke="#2a5ab0" stroke-width="0.9"/>
<rect x="102.5" y="0.5" width="35" height="23" fill="#c48c84" stroke="#d8aaa2" stroke-width="0.8"/>
<path d="M110.5 15 L120 8 L129.5 13 L120 20.5z" fill="#2a7ad0" stroke="#184a90" stroke-width="0.8"/><path d="M112 16.5 L120 21 L129 14.5" stroke="#9ad0f8" stroke-width="0.8" fill="none"/>
<circle cx="118.5" cy="9.5" r="5" fill="#c8c8f0" stroke="#3a3a80" stroke-width="1.1"/><circle cx="117.5" cy="8.5" r="2" fill="#eef"/>
<path d="M122 13 L127 18.5" stroke="#e05a30" stroke-width="2"/>
</svg>
<svg class="a" style="left:690px;top:0" width="110" height="24" viewBox="0 0 110 24">
<rect x="6.5" y="7.5" width="17" height="9.5" rx="1" fill="none" stroke="#e8dada" stroke-width="1"/>
<path d="M8.5 10 h13 M8.5 12.2 h13 M10.5 14.5 h9" stroke="#e8dada" stroke-width="0.9" stroke-dasharray="1 0.8"/>
<path d="M32 14 l2 -2 l2 2z" fill="#f0e6e6"/>
</svg>
<div class="a" style="left:733.5px;top:9px;font-size:7.2px;color:#f4eaea;white-space:nowrap">РУС</div>
<div class="a" style="left:765px;top:3.5px;font-size:7.2px;letter-spacing:-0.2px;color:#f4eaea;white-space:nowrap">21:58</div>
<div class="a" style="left:757px;top:13.8px;font-size:7.2px;letter-spacing:-0.35px;color:#f4eaea;white-space:nowrap">06.11.2015</div>
</div>
<svg id="wm" class="a" style="left:0;top:0;pointer-events:none" width="800" height="450" viewBox="0 0 800 450"><g transform="translate(226 118)">
<rect x="-46" y="-42" width="92" height="84" rx="14" transform="rotate(-16)" fill="none" stroke="rgba(110,200,215,0.17)" stroke-width="2.8"/>
<path d="M-11 -6 Q-30 -4 -50 -6 Q-30 4 -10 8z" fill="rgba(235,110,130,0.18)"/>
<path d="M-24 -29 Q-14 -22 -10 -12 Q-2 -16 12 -14 L24 -12 L13 -9 Q9 -3 8 6 Q6 18 -2 24 Q-8 16 -10 6 Q-13 -10 -24 -29z" fill="rgba(200,210,70,0.28)"/>
<path d="M6 -28 A29 29 0 1 1 -4 24" fill="none" stroke="rgba(200,215,60,0.3)" stroke-width="1.8"/>
<path d="M24 -16 A22 22 0 0 1 22 20" fill="none" stroke="rgba(225,180,100,0.22)" stroke-width="1.1"/>
</g><g transform="translate(227 277)">
<rect x="-46" y="-42" width="92" height="84" rx="14" transform="rotate(-16)" fill="none" stroke="rgba(110,200,215,0.17)" stroke-width="2.8"/>
<path d="M-11 -6 Q-30 -4 -50 -6 Q-30 4 -10 8z" fill="rgba(235,110,130,0.18)"/>
<path d="M-24 -29 Q-14 -22 -10 -12 Q-2 -16 12 -14 L24 -12 L13 -9 Q9 -3 8 6 Q6 18 -2 24 Q-8 16 -10 6 Q-13 -10 -24 -29z" fill="rgba(200,210,70,0.28)"/>
<path d="M6 -28 A29 29 0 1 1 -4 24" fill="none" stroke="rgba(200,215,60,0.3)" stroke-width="1.8"/>
<path d="M24 -16 A22 22 0 0 1 22 20" fill="none" stroke="rgba(225,180,100,0.22)" stroke-width="1.1"/>
</g><clipPath id="cl3"><rect x="0" y="0" width="800" height="426.5"/></clipPath><g clip-path="url(#cl3)"><g transform="translate(227 440)">
<rect x="-46" y="-42" width="92" height="84" rx="14" transform="rotate(-16)" fill="none" stroke="rgba(110,200,215,0.17)" stroke-width="2.8"/>
<path d="M-11 -6 Q-30 -4 -50 -6 Q-30 4 -10 8z" fill="rgba(235,110,130,0.18)"/>
<path d="M-24 -29 Q-14 -22 -10 -12 Q-2 -16 12 -14 L24 -12 L13 -9 Q9 -3 8 6 Q6 18 -2 24 Q-8 16 -10 6 Q-13 -10 -24 -29z" fill="rgba(200,210,70,0.28)"/>
<path d="M6 -28 A29 29 0 1 1 -4 24" fill="none" stroke="rgba(200,215,60,0.3)" stroke-width="1.8"/>
<path d="M24 -16 A22 22 0 0 1 22 20" fill="none" stroke="rgba(225,180,100,0.22)" stroke-width="1.1"/>
</g></g><text x="288" y="115" transform="rotate(-19 288 115)" font-family="Liberation Serif" font-weight="bold" font-size="50" letter-spacing="0.3" fill="rgba(130,120,120,0.11)" stroke="rgba(220,150,150,0.16)" stroke-width="0.9">Stud.kz - Stud.kz</text><text x="288" y="275" transform="rotate(-19 288 275)" font-family="Liberation Serif" font-weight="bold" font-size="50" letter-spacing="0.3" fill="rgba(130,120,120,0.15)" stroke="rgba(220,150,150,0.22)" stroke-width="0.9">Stud.kz - Stud.kz</text><text x="290" y="452" transform="rotate(-19 290 452)" font-family="Liberation Serif" font-weight="bold" font-size="50" letter-spacing="0.3" fill="rgba(130,120,120,0.15)" stroke="rgba(220,150,150,0.22)" stroke-width="0.9">Stud.kz - Stud.kz</text><clipPath id="cltb"><rect x="0" y="426.5" width="800" height="24"/></clipPath><g clip-path="url(#cltb)"><text x="290" y="452" transform="rotate(-19 290 452)" font-family="Liberation Serif" font-weight="bold" font-size="50" letter-spacing="0.3" fill="rgba(200,185,190,0.35)">Stud.kz - Stud.kz</text></g></svg>
</body></html>
